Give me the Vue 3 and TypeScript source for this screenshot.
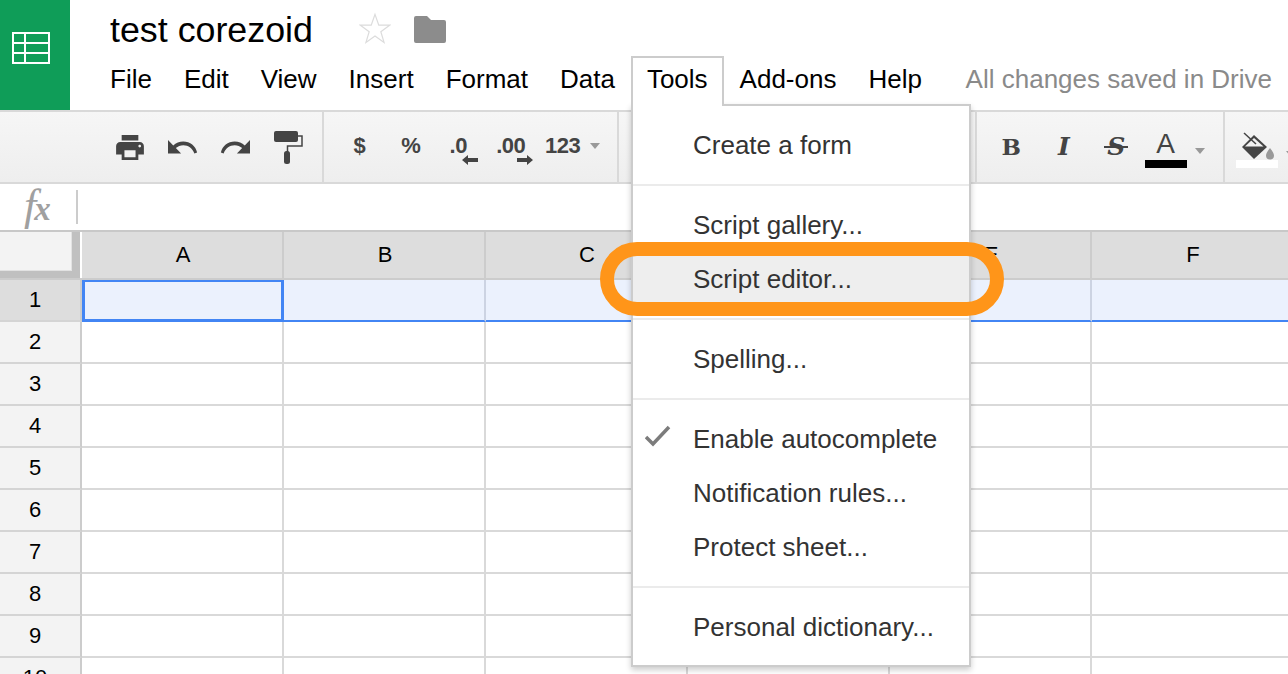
<script setup lang="ts">
const menus = ['File', 'Edit', 'View', 'Insert', 'Format', 'Data']
const columns = ['A', 'B', 'C', 'D', 'E', 'F']
const rows = [1, 2, 3, 4, 5, 6, 7, 8, 9, 10]

type MenuGroup = { label: string; checked?: boolean; hover?: boolean }[]

const toolsMenu: MenuGroup[] = [
  [{ label: 'Create a form' }],
  [{ label: 'Script gallery...' }, { label: 'Script editor...', hover: true }],
  [{ label: 'Spelling...' }],
  [
    { label: 'Enable autocomplete', checked: true },
    { label: 'Notification rules...' },
    { label: 'Protect sheet...' },
  ],
  [{ label: 'Personal dictionary...' }],
]
</script>

<template>
  <div class="app">
    <header class="header">
      <div class="logo">
        <svg width="38" height="32" viewBox="0 0 38 32" fill="none" stroke="#fff" stroke-width="2">
          <path d="M1 1h36v30H1zM1 11h36M1 21h36M13 1v30" />
        </svg>
      </div>
      <div class="header__main">
        <div class="title-row">
          <span class="title">test corezoid</span>
          <svg class="star" width="32" height="32" viewBox="0 0 34 33" fill="#fff" stroke="#dcdcdc" stroke-width="1.3">
            <path d="M17 2l4 11.5h11.5l-9.3 7 3.4 11.3L17 25l-9.6 6.8 3.4-11.3-9.3-7H13z" />
          </svg>
          <svg class="folder" width="32" height="27" viewBox="0 0 32 27" fill="#8c8c8c">
            <path d="M2 0h11l4 4h13a2 2 0 0 1 2 2v19a2 2 0 0 1-2 2H2a2 2 0 0 1-2-2V2a2 2 0 0 1 2-2z" />
          </svg>
        </div>
        <nav class="menubar">
          <span v-for="m in menus" :key="m" class="menubar__item">{{ m }}</span>
          <span class="menubar__item menubar__item--open">Tools</span>
          <span class="menubar__item">Add-ons</span>
          <span class="menubar__item">Help</span>
          <span class="status">All changes saved in Drive</span>
        </nav>
      </div>
    </header>

    <div class="toolbar">
      <div class="toolbar__group toolbar__group--first">
        <span class="tool">
          <svg width="28" height="25" viewBox="2 3 20 18" fill="#444">
            <path d="M19 8H5c-1.66 0-3 1.34-3 3v6h4v4h12v-4h4v-6c0-1.66-1.34-3-3-3zm-3 11H8v-5h8v5zm3-7c-.55 0-1-.45-1-1s.45-1 1-1 1 .45 1 1-.45 1-1 1zm-1-9H6v4h12V3z" />
          </svg>
        </span>
        <span class="tool">
          <svg width="30" height="15" viewBox="2 7 20.6 10" preserveAspectRatio="none" fill="#444">
            <path d="M12.5 8c-2.65 0-5.05.99-6.9 2.6L2 7v9h9l-3.62-3.62c1.39-1.16 3.16-1.88 5.12-1.88 3.54 0 6.55 2.31 7.6 5.5l1.9-.6C21.08 11.03 17.15 8 12.5 8z" />
          </svg>
        </span>
        <span class="tool">
          <svg class="flip" width="30" height="15" viewBox="2 7 20.6 10" preserveAspectRatio="none" fill="#444">
            <path d="M12.5 8c-2.65 0-5.05.99-6.9 2.6L2 7v9h9l-3.62-3.62c1.39-1.16 3.16-1.88 5.12-1.88 3.54 0 6.55 2.31 7.6 5.5l1.9-.6C21.08 11.03 17.15 8 12.5 8z" />
          </svg>
        </span>
        <span class="tool tool--roller">
          <svg width="29" height="33" viewBox="0 0 29 33">
            <rect x="0" y="0" width="24" height="11" rx="2" fill="#444" />
            <path d="M24 5h4v10H13.500v6" fill="none" stroke="#444" stroke-width="1.500" />
            <rect x="10" y="20" width="6" height="13" rx="2.500" fill="#444" />
          </svg>
        </span>
      </div>

      <div class="toolbar__group toolbar__group--format">
        <span class="tool tool--text">$</span>
        <span class="tool tool--text tool--percent">%</span>
        <span class="tool tool--text tool--decimal">
          <span>.0</span>
          <svg class="decimal-arrow decimal-arrow--left" width="16" height="10" viewBox="0 0 16 10" fill="#444">
            <path d="M0 5l6-5v3h10v4H6v3z" />
          </svg>
        </span>
        <span class="tool tool--text tool--decimal">
          <span>.00</span>
          <svg class="decimal-arrow decimal-arrow--right" width="16" height="10" viewBox="0 0 16 10" fill="#444">
            <path d="M16 5l-6-5v3H0v4h10v3z" />
          </svg>
        </span>
        <span class="tool tool--text tool--more">123<i class="caret"></i></span>
      </div>

      <div class="toolbar__group toolbar__group--hidden"></div>

      <div class="toolbar__group toolbar__group--style">
        <span class="tool tool--glyph tool--bold">B</span>
        <span class="tool tool--glyph tool--italic">I</span>
        <span class="tool tool--glyph tool--strike">S</span>
        <span class="tool tool--color tool--letter">
          <span class="color-letter">A</span>
          <i class="color-bar color-bar--black"></i>
          <i class="caret caret--color"></i>
        </span>
      </div>

      <div class="toolbar__group toolbar__group--fill">
        <span class="tool tool--color">
          <svg class="bucket" width="38" height="30" viewBox="0 0 38 30">
            <path d="M6 16L18 4l13 12-13 12z" fill="#444" />
            <path d="M9 15.500L18 7l9.500 8.500z" fill="#f2f2f2" />
            <path d="M8 2l12 11" stroke="#444" stroke-width="1.500" />
            <path d="M34 17c2.500 3.500 4 5.500 4 7.500a4 4 0 0 1-8 0c0-2 1.500-4 4-7.500z" fill="#999" />
          </svg>
          <i class="color-bar color-bar--white"></i>
        </span>
        <i class="caret caret--fill"></i>
      </div>
    </div>

    <div class="formula">
      <span class="formula__fx"><span class="formula__f">f</span>x</span>
      <span class="formula__divider"></span>
    </div>

    <div class="sheet">
      <div class="sheet__row sheet__row--head">
        <div class="corner"><div class="corner__inner"></div></div>
        <div v-for="c in columns" :key="c" class="col-head">{{ c }}</div>
      </div>
      <div
        v-for="r in rows"
        :key="r"
        class="sheet__row"
        :class="{ 'sheet__row--active': r === 1 }"
      >
        <div class="row-head">{{ r }}</div>
        <div
          v-for="c in columns"
          :key="c"
          class="cell"
          :class="{ 'cell--selected': r === 1 && c === 'A' }"
        ></div>
      </div>
    </div>

    <div class="dropdown">
      <template v-for="(group, i) in toolsMenu" :key="i">
        <div v-if="i > 0" class="dropdown__sep"></div>
        <div
          v-for="item in group"
          :key="item.label"
          class="dropdown__item"
          :class="{ 'dropdown__item--hover': item.hover }"
        >
          <span class="dropdown__check">
            <svg v-if="item.checked" width="26" height="22" viewBox="0 0 26 22" fill="none" stroke="#7c7c7c" stroke-width="3.500">
              <path d="M1 12l7 7L24 2" />
            </svg>
          </span>
          {{ item.label }}
        </div>
      </template>
    </div>

    <div class="ring"></div>
  </div>
</template>

<style scoped>
.app {
  position: relative;
  width: 1288px;
  height: 674px;
  overflow: hidden;
  background: #fff;
  font-family: "Liberation Sans", Arial, sans-serif;
  color: #000;
}

.header {
  display: flex;
  height: 110px;
}

.logo {
  display: flex;
  flex: none;
  align-items: flex-start;
  justify-content: flex-start;
  width: 70px;
  height: 110px;
  padding: 32px 0 0 12px;
  box-sizing: border-box;
  background: #0f9d58;
}

.header__main {
  flex: 1;
  min-width: 0;
  padding-left: 40px;
}

.title-row {
  display: flex;
  align-items: center;
  height: 56px;
  padding-bottom: 2px;
  box-sizing: border-box;
}

.title {
  padding-top: 6px;
  font-size: 35.800px;
  line-height: 54px;
}

.star {
  margin-left: 46px;
  margin-top: 2px;
}

.folder {
  margin-left: 23px;
  margin-top: 4px;
}

.menubar {
  display: flex;
  align-items: flex-start;
  height: 54px;
  margin-left: -16px;
  font-size: 26px;
}

.menubar__item {
  position: relative;
  margin-top: 2px;
  padding: 0 16px;
  line-height: 42px;
}

.menubar__item--open {
  z-index: 3;
  margin-top: 0;
  padding: 0 14px 6px;
  background: #fff;
  border: 2px solid #ccc;
  border-bottom: 0;
}

.status {
  margin-left: auto;
  margin-right: 16px;
  margin-top: 2px;
  line-height: 42px;
  color: #8a8a8a;
}

.toolbar {
  display: flex;
  height: 74px;
  box-sizing: border-box;
  border-top: 2px solid #d9d9d9;
  border-bottom: 2px solid #d9d9d9;
  background: linear-gradient(#f6f6f6, #eeeeee);
}

.toolbar__group {
  display: flex;
  flex: none;
  align-items: center;
  height: 100%;
  box-sizing: border-box;
  border-right: 2px solid #d9d9d9;
}

.toolbar__group--first {
  width: 324px;
  padding-left: 104px;
}

.toolbar__group--format {
  width: 295px;
  padding-left: 9px;
}

.toolbar__group--hidden {
  width: 358px;
}

.toolbar__group--style {
  width: 248px;
  padding-left: 8px;
}

.toolbar__group--fill {
  padding-left: 11px;
  border-right: 0;
}

.tool {
  position: relative;
  display: flex;
  flex: none;
  align-items: center;
  justify-content: center;
  width: 52.500px;
  height: 100%;
  color: #444;
}

.tool--roller {
  padding-left: 2px;
  box-sizing: border-box;
}

.flip {
  transform: scaleX(-1);
}

.tool--text {
  padding-bottom: 2px;
  box-sizing: border-box;
  font-size: 22px;
  font-weight: 700;
  letter-spacing: -0.5px;
}

.tool--percent {
  padding-right: 2px;
}

.tool--decimal {
  padding-right: 12px;
}

.decimal-arrow {
  position: absolute;
  top: 43px;
}

.decimal-arrow--left {
  left: 24px;
}

.decimal-arrow--right {
  left: 26px;
}

.tool--more {
  width: auto;
  margin-left: 2px;
}

.caret {
  display: block;
  width: 0;
  height: 0;
  margin-left: 10px;
  border-top: 6px solid #999;
  border-left: 5px solid transparent;
  border-right: 5px solid transparent;
}

.tool--glyph {
  padding-bottom: 2px;
  box-sizing: border-box;
  font-family: "DejaVu Serif", serif;
  font-size: 23px;
  font-weight: 700;
}

.tool--italic,
.tool--strike {
  font-size: 25px;
  font-style: italic;
}

.tool--strike::after {
  content: "";
  position: absolute;
  top: 34px;
  left: 14px;
  width: 24px;
  height: 2px;
  background: #444;
}

.tool--color {
  justify-content: flex-start;
  width: 42px;
  padding-bottom: 6px;
  box-sizing: border-box;
}

.tool--letter {
  margin-left: 2px;
}

.color-letter {
  width: 42px;
  font-size: 28px;
  line-height: 30px;
  text-align: center;
}

.color-bar {
  position: absolute;
  left: 0;
  top: 48px;
  width: 42px;
  height: 8px;
}

.color-bar--black {
  background: #000;
}

.color-bar--white {
  background: #fff;
}

.bucket {
  flex: none;
  margin-top: 4px;
}

.caret--color {
  position: absolute;
  top: 36px;
  left: 50px;
  margin: 0;
}

.caret--fill {
  margin: 14px 0 0 8px;
}

.formula {
  display: flex;
  align-items: center;
  height: 48px;
  box-sizing: border-box;
  border-bottom: 2px solid #c8c8c8;
}

.formula__fx {
  width: 76px;
  padding-left: 24px;
  box-sizing: border-box;
  font-family: "Liberation Serif", serif;
  font-size: 33px;
  font-style: italic;
  font-weight: 700;
  line-height: 40px;
  color: #a0a0a0;
}

.formula__f {
  margin-right: -2px;
  font-size: 44px;
  font-weight: 400;
  line-height: 40px;
}

.formula__divider {
  width: 2px;
  height: 34px;
  background: #ccc;
}

.sheet__row {
  display: flex;
  height: 42px;
  box-sizing: border-box;
}

.sheet__row--head {
  height: 48px;
}

.corner {
  flex: none;
  width: 82px;
  height: 48px;
  box-sizing: border-box;
  padding: 0 10px 8px 0;
  border-bottom: 2px solid #ccc;
  background: linear-gradient(#c0c0c0, #c0c0c0) 0 0 / 80px 46px no-repeat;
}

.corner__inner {
  height: 38px;
  background: #f3f3f3;
  border-right: 1px solid #e2e2e2;
  border-bottom: 1px solid #e2e2e2;
}

.col-head {
  flex: none;
  width: 202px;
  box-sizing: border-box;
  padding-left: 2px;
  border-right: 2px solid #ccc;
  border-bottom: 2px solid #ccc;
  background: #ddd;
  font-size: 22px;
  line-height: 45px;
  text-align: center;
}

.row-head {
  flex: none;
  width: 82px;
  box-sizing: border-box;
  border-right: 2px solid #ccc;
  border-bottom: 2px solid #d4d4d4;
  background: #f3f3f3;
  font-size: 22px;
  line-height: 39px;
  text-align: center;
  padding-right: 10px;
}

.sheet__row--active .row-head {
  background: #ddd;
}

.cell {
  flex: none;
  width: 202px;
  box-sizing: border-box;
  border-right: 2px solid #d9d9d9;
  border-bottom: 2px solid #d9d9d9;
}

.sheet__row--active .cell {
  background: #ebf1fd;
  border-right-color: #ccd3e2;
  border-bottom-color: #4285f4;
}

.sheet__row--active .cell--selected {
  border: 3px solid #4285f4;
  border-top-width: 2px;
}

.dropdown {
  position: absolute;
  z-index: 2;
  top: 104px;
  left: 631px;
  box-sizing: border-box;
  width: 340px;
  height: 563px;
  padding: 12px 0;
  background: #fff;
  border: 2px solid #ccc;
  box-shadow: 0 3px 6px rgba(0, 0, 0, 0.2);
  color: #333;
  font-size: 26px;
}

.dropdown__item {
  display: flex;
  align-items: center;
  height: 54px;
}

.dropdown__item--hover {
  background: #eee;
}

.dropdown__check {
  display: flex;
  flex: none;
  align-items: center;
  width: 60px;
  height: 44px;
  padding-left: 12px;
  padding-bottom: 6px;
  box-sizing: border-box;
}

.dropdown__sep {
  height: 2px;
  margin: 12px 0;
  background: #ebebeb;
}

.ring {
  position: absolute;
  z-index: 4;
  top: 242px;
  left: 600px;
  box-sizing: border-box;
  width: 404px;
  height: 74px;
  border: 14px solid #ff9519;
  border-radius: 37px;
}
</style>
